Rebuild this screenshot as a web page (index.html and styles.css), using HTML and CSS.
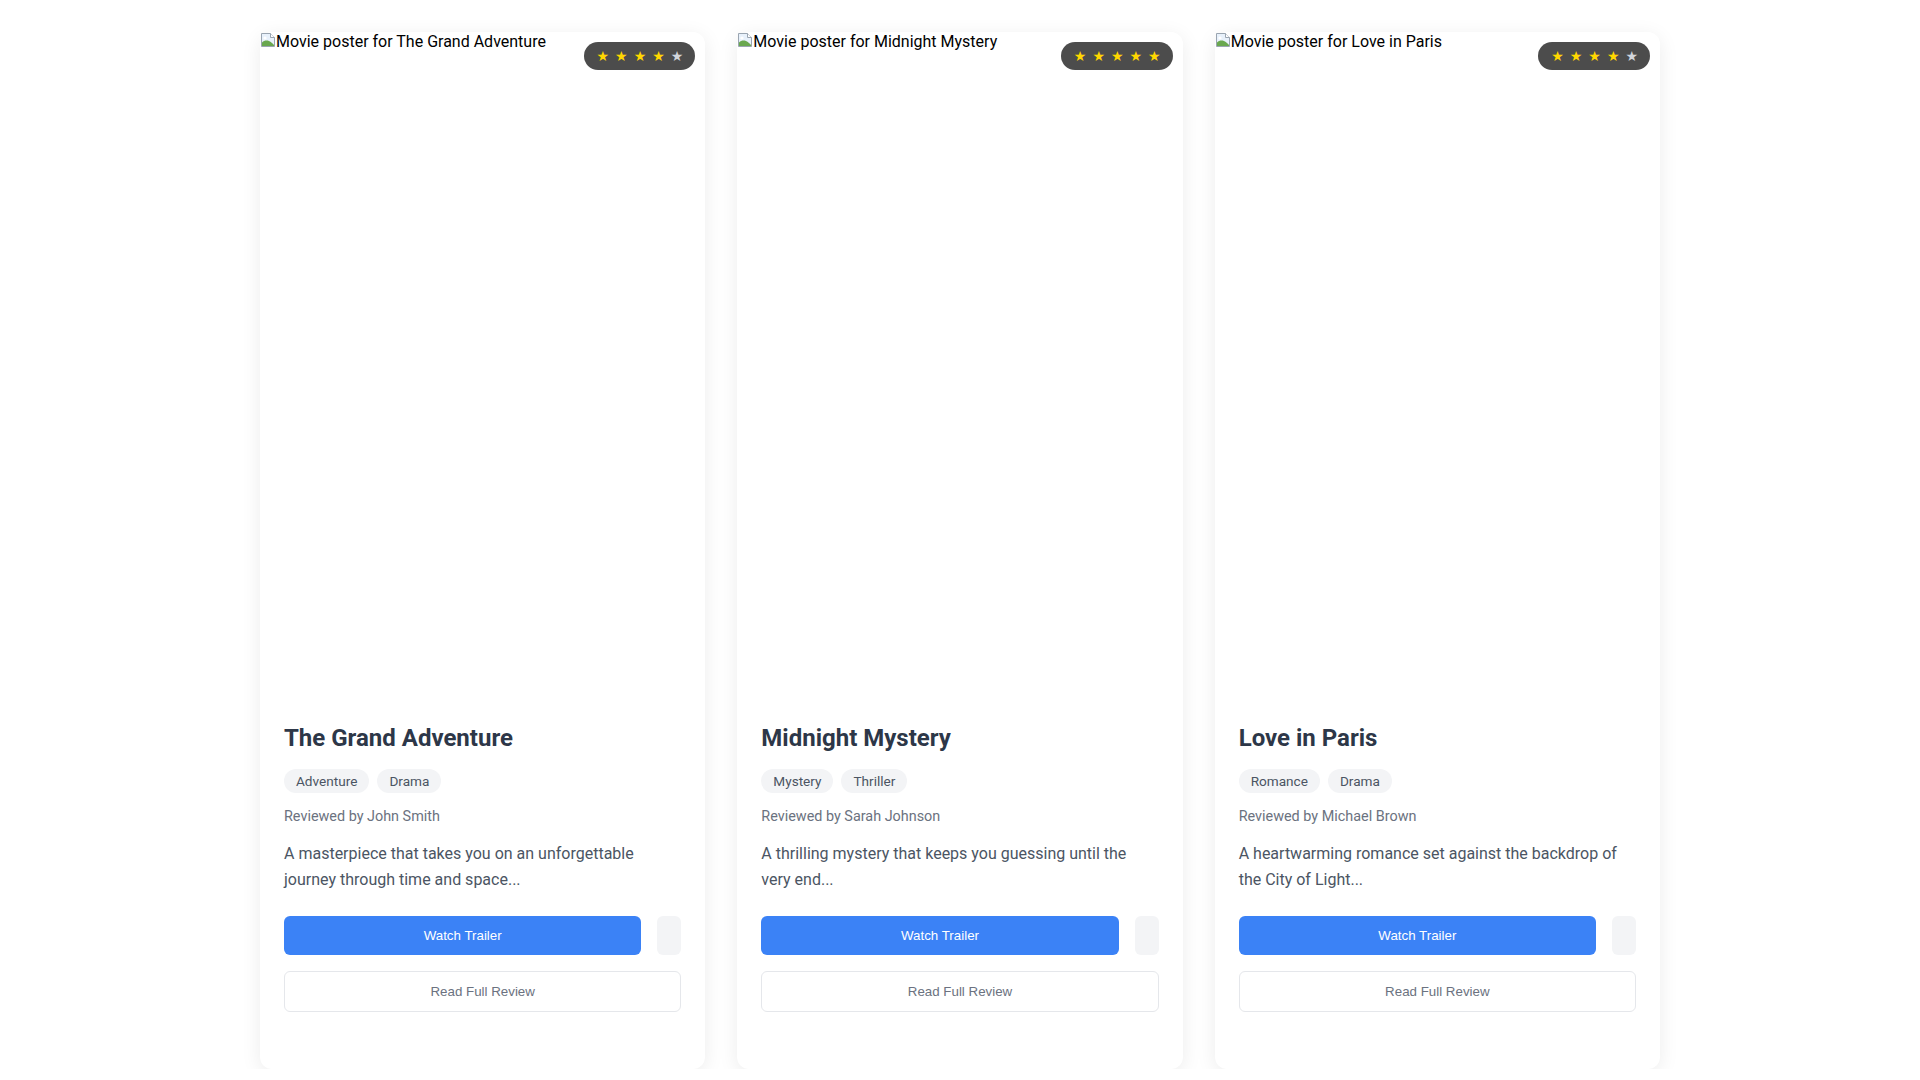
FILE: index.html
```html
<!DOCTYPE html>
<html lang="en">
<head>
<meta charset="utf-8">
<title>Movie Reviews</title>
<link rel="stylesheet" href="styles.css">
</head>
<body>
<main class="grid">
  <article class="card">
    <div class="poster">
      <div class="alt">
        <svg class="broken" width="16" height="16" viewBox="0 0 16 16"><path d="M1.5 1.5h9l4 4v9h-13z" fill="#e8f1fb" stroke="#9aa5b1"/><path d="M10.5 1.5v4h4" fill="#fff" stroke="#9aa5b1"/><path d="M2 14V10.5c2-2 4.5-2.5 7-1.5 2 0.8 3.5 2.5 5 4V14z" fill="#6aa84f"/><circle cx="5" cy="6" r="1.6" fill="#fff"/></svg><span>Movie poster for The Grand Adventure</span>
      </div>
      <div class="rating"><span class="star on">★</span><span class="star on">★</span><span class="star on">★</span><span class="star on">★</span><span class="star">★</span></div>
    </div>
    <div class="content">
      <h2 class="title">The Grand Adventure</h2>
      <div class="tags"><span class="tag">Adventure</span><span class="tag">Drama</span></div>
      <p class="reviewer">Reviewed by John Smith</p>
      <p class="desc">A masterpiece that takes you on an unforgettable journey through time and space...</p>
      <div class="actions"><button class="btn-primary">Watch Trailer</button><button class="btn-icon"></button></div>
      <button class="btn-outline">Read Full Review</button>
    </div>
  </article>
  <article class="card">
    <div class="poster">
      <div class="alt">
        <svg class="broken" width="16" height="16" viewBox="0 0 16 16"><path d="M1.5 1.5h9l4 4v9h-13z" fill="#e8f1fb" stroke="#9aa5b1"/><path d="M10.5 1.5v4h4" fill="#fff" stroke="#9aa5b1"/><path d="M2 14V10.5c2-2 4.5-2.5 7-1.5 2 0.8 3.5 2.5 5 4V14z" fill="#6aa84f"/><circle cx="5" cy="6" r="1.6" fill="#fff"/></svg><span>Movie poster for Midnight Mystery</span>
      </div>
      <div class="rating"><span class="star on">★</span><span class="star on">★</span><span class="star on">★</span><span class="star on">★</span><span class="star on">★</span></div>
    </div>
    <div class="content">
      <h2 class="title">Midnight Mystery</h2>
      <div class="tags"><span class="tag">Mystery</span><span class="tag">Thriller</span></div>
      <p class="reviewer">Reviewed by Sarah Johnson</p>
      <p class="desc">A thrilling mystery that keeps you guessing until the very end...</p>
      <div class="actions"><button class="btn-primary">Watch Trailer</button><button class="btn-icon"></button></div>
      <button class="btn-outline">Read Full Review</button>
    </div>
  </article>
  <article class="card">
    <div class="poster">
      <div class="alt">
        <svg class="broken" width="16" height="16" viewBox="0 0 16 16"><path d="M1.5 1.5h9l4 4v9h-13z" fill="#e8f1fb" stroke="#9aa5b1"/><path d="M10.5 1.5v4h4" fill="#fff" stroke="#9aa5b1"/><path d="M2 14V10.5c2-2 4.5-2.5 7-1.5 2 0.8 3.5 2.5 5 4V14z" fill="#6aa84f"/><circle cx="5" cy="6" r="1.6" fill="#fff"/></svg><span>Movie poster for Love in Paris</span>
      </div>
      <div class="rating"><span class="star on">★</span><span class="star on">★</span><span class="star on">★</span><span class="star on">★</span><span class="star">★</span></div>
    </div>
    <div class="content">
      <h2 class="title">Love in Paris</h2>
      <div class="tags"><span class="tag">Romance</span><span class="tag">Drama</span></div>
      <p class="reviewer">Reviewed by Michael Brown</p>
      <p class="desc">A heartwarming romance set against the backdrop of the City of Light...</p>
      <div class="actions"><button class="btn-primary">Watch Trailer</button><button class="btn-icon"></button></div>
      <button class="btn-outline">Read Full Review</button>
    </div>
  </article>
</main>
</body>
</html>
```
FILE: styles.css
```css
* { box-sizing: border-box; }
html, body { margin: 0; background: #ffffff; }
body {
  font-family: Roboto, "Liberation Sans", sans-serif;
  color: #000;
}
.grid {
  max-width: 1400px;
  margin: 0 auto;
  padding-top: 32px;
  display: grid;
  grid-template-columns: repeat(3, 1fr);
  gap: 32px;
}
.card {
  background: #fff;
  border-radius: 12px;
  box-shadow: 0 4px 20px rgba(0, 0, 0, 0.08);
}
.poster {
  position: relative;
  aspect-ratio: 2 / 3;
  width: 100%;
}
.alt {
  display: flex;
  align-items: flex-start;
  font-size: 16px;
  line-height: normal;
}
.broken { flex: none; display: block; }
.rating {
  position: absolute;
  top: 10px;
  right: 10px;
  height: 28px;
  display: flex;
  align-items: center;
  gap: 6px;
  padding: 0 12px 0 13px;
  border-radius: 20px;
  background: rgba(0, 0, 0, 0.7);
}
.star {
  font-family: "DejaVu Sans", sans-serif;
  font-size: 14px;
  line-height: 1;
  color: #d1d5db;
}
.star.on { color: #ffd700; }
.content { padding: 24px 24px 57px; }
.title {
  margin: 0 0 16px;
  font-size: 24px;
  line-height: 1.2;
  font-weight: 700;
  color: #2d3748;
}
.tags { display: flex; gap: 8px; margin-bottom: 15px; }
.tag {
  background: #f3f4f6;
  color: #4b5563;
  font-size: 13.6px;
  line-height: 16px;
  padding: 4px 12px;
  border-radius: 12px;
}
.reviewer {
  margin: 0 0 16px;
  font-size: 14.4px;
  color: #6b7280;
}
.desc {
  margin: 0 0 23px;
  font-size: 16px;
  line-height: 26px;
  color: #4b5563;
}
.actions { display: flex; gap: 16px; margin-bottom: 16px; }
button {
  font-family: "Liberation Sans", Arial, sans-serif;
  font-size: 13.333px;
  line-height: 15px;
  padding: 12px;
  border-radius: 6px;
  cursor: pointer;
}
.btn-primary {
  flex: 1;
  background: #3b82f6;
  color: #fff;
  border: none;
}
.btn-icon {
  width: 24px;
  background: #f3f4f6;
  border: none;
}
.btn-outline {
  display: block;
  width: 100%;
  background: #fff;
  color: #6b7280;
  border: 1px solid #e5e7eb;
}
```
